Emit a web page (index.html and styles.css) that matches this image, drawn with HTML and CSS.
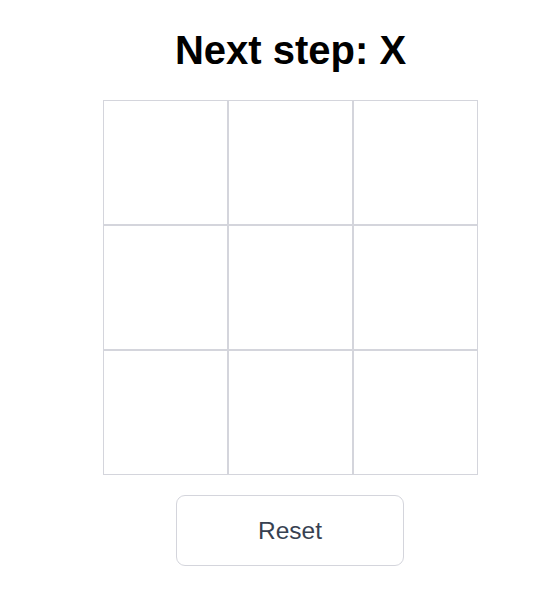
FILE: index.html
```html
<!DOCTYPE html>
<html>
<head>
<meta charset="utf-8">
<link rel="stylesheet" href="styles.css">
</head>
<body>
<main class="game">
  <h1 class="status">Next step: X</h1>
  <div class="board">
    <button class="cell"></button>
    <button class="cell"></button>
    <button class="cell"></button>
    <button class="cell"></button>
    <button class="cell"></button>
    <button class="cell"></button>
    <button class="cell"></button>
    <button class="cell"></button>
    <button class="cell"></button>
  </div>
  <button class="reset">Reset</button>
</main>
</body>
</html>
```
FILE: styles.css
```css
html, body {
  margin: 0;
  padding: 0;
  background: #ffffff;
}
.game {
  display: flex;
  flex-direction: column;
  align-items: center;
  padding: 27px 0 0 28px;
  font-family: "Liberation Sans", Arial, sans-serif;
}
.status {
  margin: 0;
  font-size: 40px;
  line-height: 46px;
  font-weight: 700;
  color: #000000;
}
.board {
  margin-top: 27px;
  display: grid;
  grid-template-columns: repeat(3, 125px);
  grid-template-rows: repeat(3, 125px);
}
.cell {
  margin: 0;
  padding: 0;
  background: #ffffff;
  border: 1px solid #d4d5dc;
  box-sizing: border-box;
}
.reset {
  margin: 20px 1px 0 0;
  width: 228px;
  height: 71px;
  box-sizing: border-box;
  background: #ffffff;
  border: 1px solid #d4d5dc;
  border-radius: 9px;
  font-family: "Liberation Sans", Arial, sans-serif;
  font-size: 24.5px;
  color: #374151;
}
```
